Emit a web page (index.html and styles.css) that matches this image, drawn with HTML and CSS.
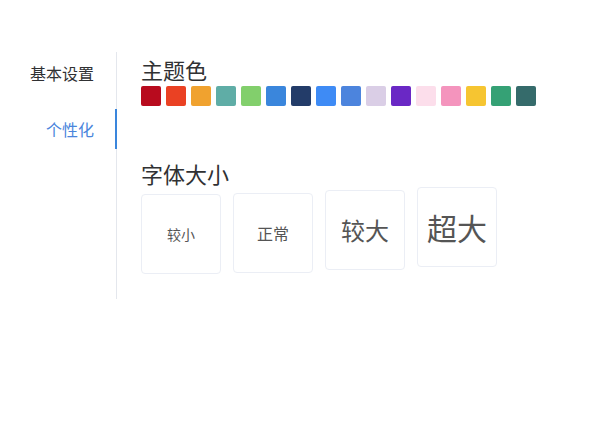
FILE: index.html
```html
<!DOCTYPE html>
<html>
  <head>
    <meta charset="UTF-8">
    <title>设置</title>
    <link rel="stylesheet" href="styles.css">
  </head>
  <body>
    <div class="settings">
      <div class="tabs">
        <div class="tab">基本设置</div>
        <div class="tab active">个性化</div>
      </div>
      <div class="panel">
        <div class="section">
          <h2>主题色</h2>
          <div class="swatches">
            <span class="swatch" style="background:#b80b1e"></span>
            <span class="swatch" style="background:#ea4123"></span>
            <span class="swatch" style="background:#f0a22f"></span>
            <span class="swatch" style="background:#5fada6"></span>
            <span class="swatch" style="background:#82cf6c"></span>
            <span class="swatch" style="background:#3a86dc"></span>
            <span class="swatch" style="background:#233c69"></span>
            <span class="swatch" style="background:#3e8bf5"></span>
            <span class="swatch" style="background:#4c84dd"></span>
            <span class="swatch" style="background:#dacee6"></span>
            <span class="swatch" style="background:#6a28c5"></span>
            <span class="swatch" style="background:#fcdeeb"></span>
            <span class="swatch" style="background:#f494bd"></span>
            <span class="swatch" style="background:#f6c531"></span>
            <span class="swatch" style="background:#35a175"></span>
            <span class="swatch" style="background:#356b6b"></span>
          </div>
        </div>
        <div class="section font-section">
          <h2>字体大小</h2>
          <div class="sizes">
            <div class="size size-small">较小</div>
            <div class="size size-normal">正常</div>
            <div class="size size-large">较大</div>
            <div class="size size-huge">超大</div>
          </div>
        </div>
      </div>
    </div>
  </body>
</html>
```

FILE: styles.css
```css
body { margin: 0; font-family: "Noto Sans CJK SC", "Noto Sans", sans-serif; color: #303133; background: #fff; }
.settings { display: flex; margin-top: 52px; }

.tabs { width: 116px; border-right: 1px solid #e4e7ed; padding-top: 1px; }
.tab { position: relative; height: 40px; line-height: 40px; padding-right: 22px; margin-bottom: 16px; text-align: right; font-size: 16px; color: #303133; }
.tab.active { color: #4a85dc; }
.tab.active:after { content: ""; position: absolute; right: -1px; top: 0; width: 2px; height: 40px; background: #3a86dc; }

.panel { padding: 4px 0 25px 24px; }
h2 { margin: 0; font-size: 22px; line-height: 26px; font-weight: normal; color: #303133; }

.swatches { display: flex; gap: 5px; margin-top: 4px; }
.swatch { width: 20px; height: 20px; border-radius: 2px; }

.font-section { margin-top: 54px; }
.sizes { display: flex; align-items: baseline; gap: 12px; margin-top: 1px; }
.size { box-sizing: border-box; width: 80px; height: 80px; line-height: 78px; text-align: center; border: 1px solid #ebeef5; border-radius: 4px; color: #555; }
.size-small { font-size: 14px; }
.size-normal { font-size: 16px; }
.size-large { font-size: 24px; }
.size-huge { font-size: 30px; }
```
